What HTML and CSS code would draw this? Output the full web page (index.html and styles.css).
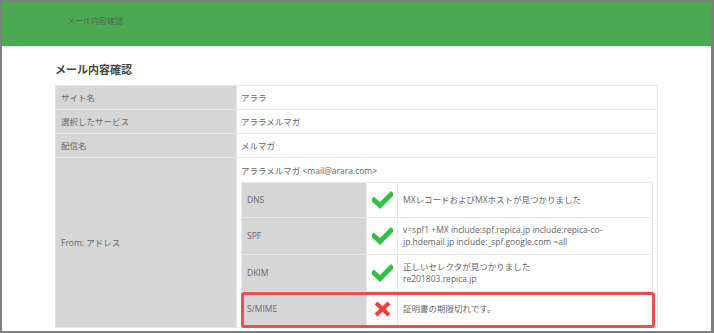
FILE: index.html
```html
<!DOCTYPE html>
<html lang="ja">
<head>
  <meta charset="UTF-8">
  <title>メール内容確認</title>
  <meta name="viewport" content="width=device-width, initial-scale=1.0">
  <link rel="stylesheet" href="styles.css">
</head>
<body>
  <div class="frame">
    <header class="topbar">
      <span class="topbar-title">メール内容確認</span>
    </header>
    <main class="content">
      <h2 class="page-title">メール内容確認</h2>
      <table class="confirm">
        <tr>
          <th>サイト名</th>
          <td>アララ</td>
        </tr>
        <tr>
          <th>選択したサービス</th>
          <td>アララメルマガ</td>
        </tr>
        <tr>
          <th>配信名</th>
          <td>メルマガ</td>
        </tr>
        <tr>
          <th>From: アドレス</th>
          <td class="from-cell">
            <p class="from-addr">アララメルマガ &lt;mail@arara.com&gt;</p>
            <div class="checks-wrap">
              <table class="checks">
                <tr>
                  <th>DNS</th>
                  <td class="icon"><svg class="ok" viewBox="0 0 21 17"><path d="M2 8.5 L8 14 L19 3"/></svg></td>
                  <td>MXレコードおよびMXホストが見つかりました</td>
                </tr>
                <tr>
                  <th>SPF</th>
                  <td class="icon"><svg class="ok" viewBox="0 0 21 17"><path d="M2 8.5 L8 14 L19 3"/></svg></td>
                  <td>v=spf1 +MX include:spf.repica.jp include:repica-co-<br>jp.hdemail.jp include:_spf.google.com ~all</td>
                </tr>
                <tr>
                  <th>DKIM</th>
                  <td class="icon"><svg class="ok" viewBox="0 0 21 17"><path d="M2 8.5 L8 14 L19 3"/></svg></td>
                  <td>正しいセレクタが見つかりました<br>re201803.repica.jp</td>
                </tr>
                <tr>
                  <th>S/MIME</th>
                  <td class="icon"><svg class="ng" viewBox="0 0 17 15"><path d="M2 1.5 L15 13.5 M15 1.5 L2 13.5"/></svg></td>
                  <td>証明書の期限切れです。</td>
                </tr>
              </table>
              <div class="alert-box"></div>
            </div>
          </td>
        </tr>
      </table>
    </main>
  </div>
</body>
</html>
```

FILE: styles.css
```css
*,
*::before,
*::after {
  box-sizing: border-box;
}
html, body {
  height: 333px;
  overflow: hidden;
}
body {
  margin: 0;
  padding: 2px 3px 2px 2px;
  background: #7f7f7f;
  font-family: "Open Sans", "Noto Sans CJK JP", sans-serif;
  color: #666;
}
.frame {
  height: 329px;
  background: #fff;
  overflow: hidden;
}
.topbar {
  height: 45px;
  background: #4ba853;
  border-bottom: 1px solid #d2f2d8;
  padding: 5px 0 0 65px;
}
.topbar-title {
  font-size: 8px;
  line-height: 12px;
  color: #4d6a4f;
}
.content {
  padding: 0 53px;
}
.page-title {
  margin: 15px 0 7px;
  font-size: 11px;
  line-height: 16px;
  font-weight: bold;
  color: #444;
}
table {
  border-collapse: collapse;
  width: 100%;
  font-size: 8.5px;
  line-height: 12px;
}
th, td {
  border: 1px solid #e8e8e8;
  text-align: left;
  font-weight: normal;
  vertical-align: middle;
}
.confirm th {
  width: 181px;
  background: #d6d6d6;
  padding: 6px 5px 5px;
}
.confirm td {
  padding: 6px 4px 5px;
}
.confirm .from-cell {
  padding: 7px 4px 0 4px;
}
.from-addr {
  margin: 0 0 5px;
}
.checks-wrap {
  position: relative;
}
.checks th {
  width: 125px;
  background: #d6d6d6;
  padding: 6px 5px;
}
.checks td {
  padding: 6px 5px;
}
.checks td.icon {
  width: 31px;
  padding: 6px 0;
  text-align: center;
}
.icon svg {
  display: block;
  margin: 0 auto;
  height: 22px;
}
.ok {
  width: 21px;
  fill: none;
  stroke: #33c240;
  stroke-width: 5;
  stroke-linecap: square;
}
.ng {
  width: 17px;
  fill: none;
  stroke: #f53c3c;
  stroke-width: 4;
}
.alert-box {
  position: absolute;
  left: 0;
  right: -2px;
  bottom: -1px;
  height: 36px;
  border: 3px solid #f24d4d;
  border-radius: 3px;
}
```
